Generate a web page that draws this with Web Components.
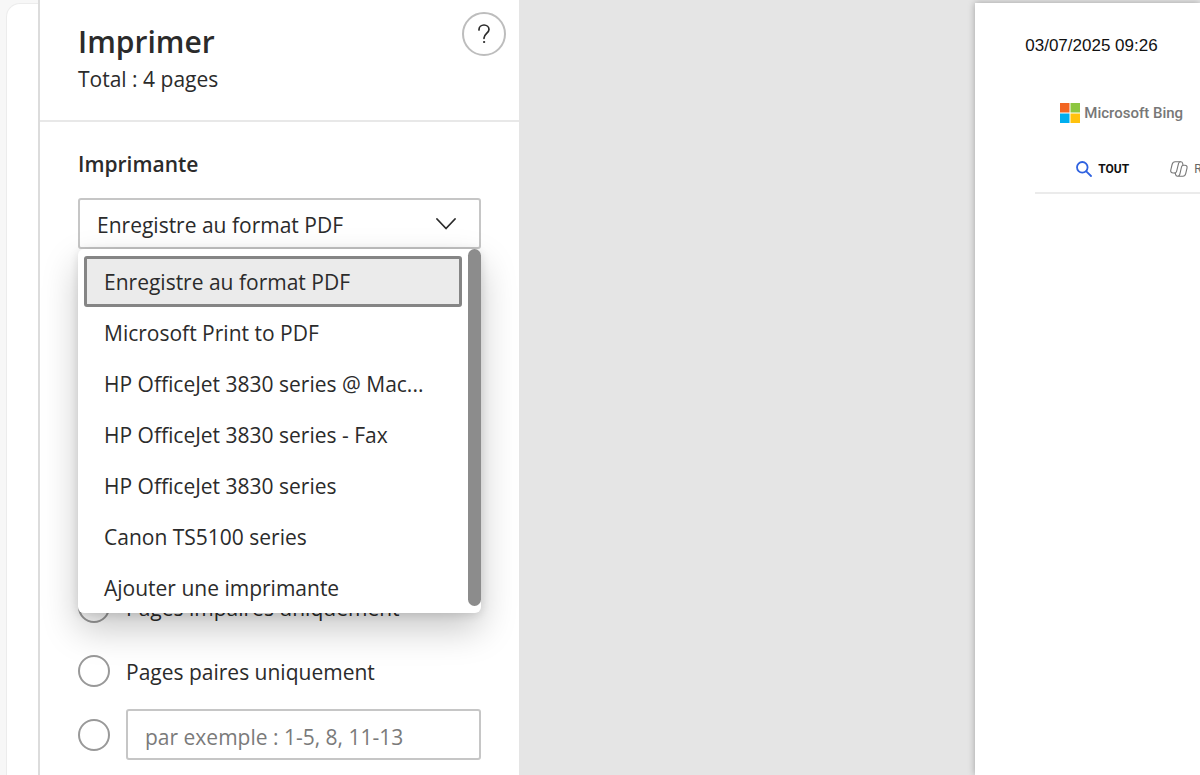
<!DOCTYPE html>
<html lang="fr">
<head>
<meta charset="utf-8">
<meta name="viewport" content="width=device-width, initial-scale=1">
<title>Imprimer</title>
<style>
html, body { height: 100%; margin: 0; overflow: hidden; }
body { font: 21px/30px "Open Sans", "Noto Sans", sans-serif; color: #2b2b2b; background: #f7f7f7; }
</style>
</head>
<body>
<print-dialog>
  <print-header slot="header" heading="Imprimer" summary="Total : 4 pages"></print-header>
  <printer-picker label="Imprimante">
    <printer-option selected>Enregistre au format PDF</printer-option>
    <printer-option>Microsoft Print to PDF</printer-option>
    <printer-option>HP OfficeJet 3830 series @ Mac...</printer-option>
    <printer-option>HP OfficeJet 3830 series - Fax</printer-option>
    <printer-option>HP OfficeJet 3830 series</printer-option>
    <printer-option>Canon TS5100 series</printer-option>
    <printer-option>Ajouter une imprimante</printer-option>
  </printer-picker>
  <page-range></page-range>
  <page-preview slot="preview"></page-preview>
</print-dialog>
<script>
class BaseElement extends HTMLElement {
  constructor() {
    super();
    this.attachShadow({ mode: "open" });
  }
  render(html) {
    const t = document.createElement("template");
    t.innerHTML = "<style>*{box-sizing:border-box}</style>" + html;
    this.shadowRoot.replaceChildren(t.content.cloneNode(true));
  }
}

customElements.define("print-dialog", class extends BaseElement {
  connectedCallback() {
    this.render(`<style>
      :host { display: flex; min-height: 100vh; }
      .edge { flex: 0 0 38px; padding: 3px 0 0 6px; display: flex; }
      .edge div { flex: 1; background: #fff; border: 1px solid #ececec; border-right: 0; border-bottom: 0; border-radius: 14px 0 0 0; }
      section { flex: 0 0 481px; background: #fff; border-left: 2px solid #dcdcdc; }
      .settings { padding: 27px 38px 14px; }
      main { flex: 1; min-width: 0; background: #e5e5e5; display: flex; overflow: hidden; }
    </style>
    <div class="edge"><div></div></div>
    <section>
      <slot name="header"></slot>
      <div class="settings"><slot></slot></div>
    </section>
    <main><slot name="preview"></slot></main>`);
  }
});

customElements.define("print-header", class extends BaseElement {
  connectedCallback() {
    this.render(`<style>
      :host { display: block; border-bottom: 2px solid #e8e8e8; }
      header { display: flex; justify-content: space-between; align-items: flex-start; padding: 12px 13px 26px 38px; }
      h1 { margin: 9px 0 1px; font-size: 30px; line-height: 42px; font-weight: 600; }
      p { margin: 0; }
      button { width: 44px; height: 44px; padding: 0; border: 2px solid #bdbdbd; border-radius: 50%; background: #fff; display: grid; place-items: center; color: #2b2b2b; }
    </style>
    <header>
      <div><h1>${this.getAttribute("heading")}</h1><p>${this.getAttribute("summary")}</p></div>
      <button type="button" aria-label="Aide"><svg width="14" height="20" viewBox="0 0 14 20" fill="none" stroke="currentColor" stroke-width="1.7" stroke-linecap="round" stroke-linejoin="round"><path d="M2 6V5.500a5 4.500 0 0 1 10 0c0 3.500-5 4.500-5 8.500v.3"/><circle cx="7" cy="18" r=".6" fill="currentColor" stroke-width="1"/></svg></button>
    </header>`);
  }
});

customElements.define("printer-picker", class extends BaseElement {
  connectedCallback() {
    this.render(`<style>
      :host { display: block; position: relative; }
      label { display: block; font-weight: 600; margin-bottom: 19px; }
      .field { position: relative; }
      select { appearance: none; display: block; width: 100%; height: 51px; padding: 2px 56px 0 17px; font: inherit; color: inherit; background: #fff; border: 2px solid #c6c6c6; border-radius: 3px; }
      svg { position: absolute; right: 25px; top: 20px; pointer-events: none; }
      .popup { position: absolute; z-index: 1; top: 100%; left: 0; right: 0; display: flex; background: #fff; border-radius: 6px; box-shadow: 0 16px 36px rgba(0,0,0,.22), 0 2px 10px rgba(0,0,0,.12); }
      .list { flex: 1; min-width: 0; padding: 7px 6px 0; }
      .bar { flex: 0 0 13px; margin-bottom: 7px; background: #8c8c8c; border-radius: 7px; }
    </style>
    <label for="printer">${this.getAttribute("label")}</label>
    <div class="field">
      <select id="printer"><option>Enregistre au format PDF</option></select>
      <svg width="20" height="12" viewBox="0 0 20 12" fill="none" stroke="#2b2b2b" stroke-width="1.8" stroke-linecap="round" stroke-linejoin="round"><path d="M1 1l9 9.500L19 1"/></svg>
    </div>
    <div class="popup">
      <div class="list" role="listbox" aria-label="Imprimantes"><slot></slot></div>
      <div class="bar"></div>
    </div>`);
  }
});

customElements.define("printer-option", class extends BaseElement {
  connectedCallback() {
    this.setAttribute("role", "option");
    this.setAttribute("aria-selected", this.hasAttribute("selected"));
    this.render(`<style>
      :host { display: block; }
      button { display: block; width: 100%; height: 51px; padding: 0 17px; font: inherit; color: inherit; text-align: left; white-space: nowrap; background: transparent; border: 3px solid transparent; border-radius: 3px; }
      :host([selected]) button { background: #ebebeb; border-color: #858585; }
    </style><button type="button" tabindex="-1"><slot></slot></button>`);
  }
});

customElements.define("page-range", class extends BaseElement {
  connectedCallback() {
    this.render(`<style>
      :host { display: block; margin-top: 332px; }
      fieldset { border: 0; margin: 0; padding: 0; display: grid; gap: 13px; min-width: 0; }
      .row { display: flex; align-items: center; gap: 16px; height: 51px; }
      label { padding-top: 2px; }
      input[type=radio] { appearance: none; flex: none; width: 32px; height: 32px; margin: 0; border: 2px solid #999; border-radius: 50%; background: #fff; }
      input[type=text] { flex: 1; min-width: 0; height: 51px; padding: 4px 17px 0; font: inherit; border: 2px solid #c6c6c6; border-radius: 3px; background: #fff; }
      input::placeholder { color: #7a7a7a; opacity: 1; }
    </style>
    <fieldset aria-label="Pages">
      <div class="row"><input type="radio" name="range" id="odd"><label for="odd">Pages impaires uniquement</label></div>
      <div class="row"><input type="radio" name="range" id="even"><label for="even">Pages paires uniquement</label></div>
      <div class="row"><input type="radio" name="range" id="custom" aria-label="Pages choisies"><input type="text" aria-label="Pages à imprimer" placeholder="par exemple : 1-5, 8, 11-13"></div>
    </fieldset>`);
  }
});

customElements.define("page-preview", class extends BaseElement {
  connectedCallback() {
    this.render(`<style>
      :host { display: flex; flex: 1; min-width: 0; padding: 3px 0 0 67%; }
      article { flex: 1; min-width: 0; overflow: hidden; background: #fff; box-shadow: 0 0 7px rgba(0,0,0,.3); padding: 31px 0 0 50px; color: #111; }
      time { display: block; font: 17px/24px "Liberation Sans", Arial, sans-serif; white-space: nowrap; }
      .brand { display: flex; align-items: center; gap: 4px; margin: 43px 0 0 35px; font: 500 15px/24px Roboto, sans-serif; color: #777; white-space: nowrap; }
      svg { flex: none; }
      nav { display: flex; align-items: center; height: 48px; margin: 21px 0 0 10px; padding-left: 41px; border-bottom: 2px solid #ebebeb; font: 12px/16px Roboto, sans-serif; }
      a { display: flex; align-items: center; gap: 6px; color: #666; text-decoration: none; }
      a[aria-current] { color: #111; font-weight: 700; }
      a + a { margin-left: 41px; }
    </style>
    <article>
      <time datetime="2025-07-03T09:26">03/07/2025 09:26</time>
      <div class="brand">
        <svg width="20" height="20" viewBox="0 0 20 20" aria-hidden="true"><path fill="#f26522" d="M0 0h9.500v9.500H0z"/><path fill="#8dc63f" d="M10.500 0H20v9.500h-9.500z"/><path fill="#00aeef" d="M0 10.500h9.500V20H0z"/><path fill="#ffc20e" d="M10.500 10.500H20V20h-9.500z"/></svg>
        <span>Microsoft Bing</span>
      </div>
      <nav>
        <a href="#" aria-current="page"><svg width="16" height="16" viewBox="0 0 16 16" fill="none" stroke="#2f62e0" stroke-width="1.800" stroke-linecap="round"><circle cx="6.300" cy="6.300" r="5.300"/><path d="M10.300 10.300l4.700 4.700"/></svg>TOUT</a>
        <a href="#"><svg width="18" height="16" viewBox="0 0 18 16" fill="none" stroke="#777" stroke-width="1.100" stroke-linejoin="round"><path d="M5.500 12H3.300C1.200 12 .4 10.800.8 9l1.300-5.500C2.600 1.600 3.600.8 5.200.8h5.600c1.200 0 1.700.7 1.900 1.700l.3 1.800"/><path d="M10.600.8C9.400.8 8.800 1.500 8.500 2.700L6.600 10.300C6.300 11.500 5.700 12 4.500 12"/><path d="M5.300 12l.3 1.600c.2 1 .8 1.600 1.900 1.600h5.300c1.600 0 2.500-.9 2.900-2.600L17 7.200c.4-1.800-.3-2.900-2.200-2.900h-1.300c-1.200 0-1.700.6-2 1.700L9.800 13.300C9.500 14.500 8.800 15.200 7.600 15.200"/></svg>R</a>
      </nav>
    </article>`);
  }
});
</script>
</body>
</html>
